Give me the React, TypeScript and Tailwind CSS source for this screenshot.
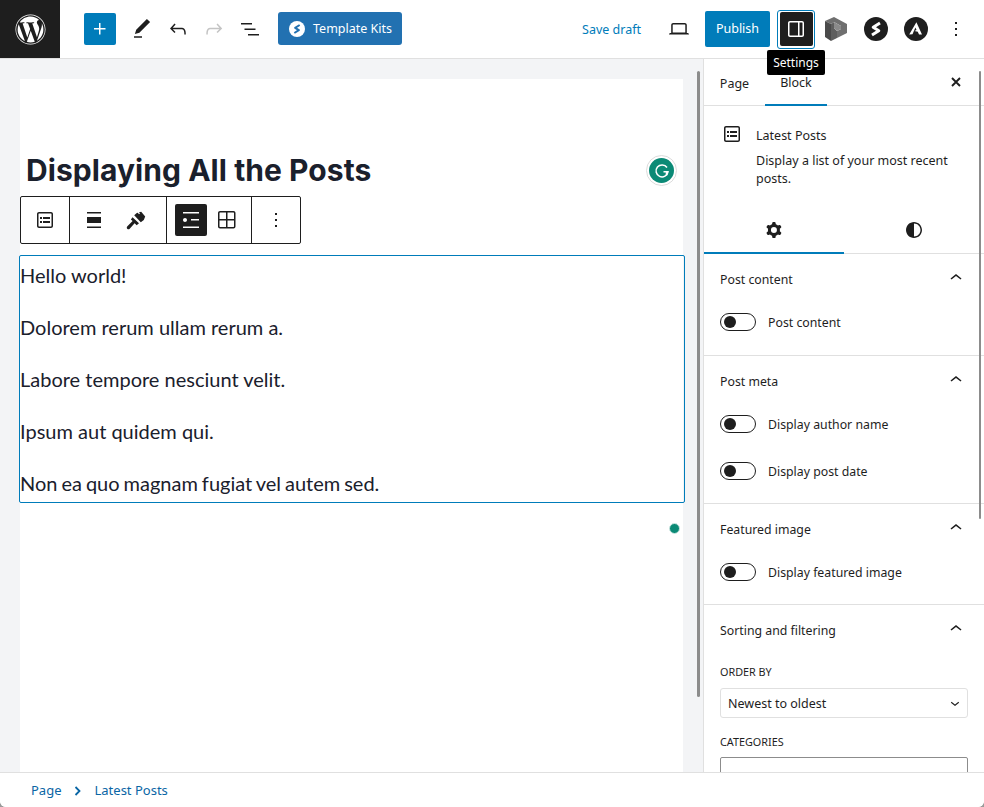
import React from 'react';
import { FaWordpress } from 'react-icons/fa';

const ui = "font-['Noto_Sans','Open_Sans',sans-serif]";

const Icon: React.FC<{ d: string; size?: number; className?: string; evenodd?: boolean }> = ({ d, size = 24, className = '', evenodd }) => (
  <svg width={size} height={size} viewBox="0 0 24 24" fill="currentColor" className={className}>
    <path d={d} fillRule={evenodd ? 'evenodd' : undefined} clipRule={evenodd ? 'evenodd' : undefined} />
  </svg>
);

const paths = {
  plus: 'M11 12.5V17.5H12.5V12.5H17.5V11H12.5V6H11V11H6V12.5H11Z',
  edit: 'M20.1 5.1L16.9 2 6.2 12.7l-1.3 4.4 4.5-1.3L20.1 5.1zM4 20.8h8v-1.5H4v1.5z',
  undo: 'M18.3 11.7c-.6-.6-1.4-.9-2.3-.9H6.7l2.9-3.3-1.1-1-4.5 5L8.5 16l1-1-2.7-2.7H16c.5 0 .9.2 1.3.5 1 1 1 3.4 1 4.5v.3h1.5v-.2c0-1.5 0-4.3-1.5-5.7z',
  redo: 'M15.6 6.5l-1.1 1 2.9 3.3H8c-.9 0-1.7.3-2.3.9-1.4 1.5-1.4 4.2-1.4 5.6v.2h1.5v-.3c0-1.1 0-3.5 1-4.5.3-.3.7-.5 1.3-.5h9.2L14.5 15l1.1 1.1 4.6-4.6-4.6-5z',
  listView: 'M3 6h11v1.5H3V6zm3.5 5.5h11V13h-11v-1.5zM21 17H10v1.5h11V17z',
  desktop: 'M20.5 16h-.7V8c0-1.1-.9-2-2-2H6.2c-1.1 0-2 .9-2 2v8h-.7c-.8 0-1.5.7-1.5 1.5h20c0-.8-.7-1.5-1.5-1.5zM5.7 8c0-.3.2-.5.5-.5h11.6c.3 0 .5.2.5.5v7.6H5.7V8z',
  sidebar: 'M18 4H6c-1.1 0-2 .9-2 2v12c0 1.1.9 2 2 2h12c1.1 0 2-.9 2-2V6c0-1.1-.9-2-2-2zm-4 14.5H6c-.3 0-.5-.2-.5-.5V6c0-.3.2-.5.5-.5h8v13zm4.5-.5c0 .3-.2.5-.5.5h-2.5v-13H18c.3 0 .5.2.5.5v12z',
  more: 'M13 19h-2v-2h2v2zm0-6h-2v-2h2v2zm0-6h-2V5h2v2z',
  postList: 'M18 4H6c-1.1 0-2 .9-2 2v12c0 1.1.9 2 2 2h12c1.1 0 2-.9 2-2V6c0-1.1-.9-2-2-2zm.5 14c0 .3-.2.5-.5.5H6c-.3 0-.5-.2-.5-.5V6c0-.3.2-.5.5-.5h12c.3 0 .5.2.5.5v12zM7 11h2V9H7v2zm0 4h2v-2H7v2zm3-4h7V9h-7v2zm0 4h7v-2h-7v2z',
  grid: 'm3 5c0-1.10457.89543-2 2-2h13.5c1.1046 0 2 .89543 2 2v13.5c0 1.1046-.8954 2-2 2h-13.5c-1.10457 0-2-.8954-2-2zm2-.5h6v6.5h-6.5v-6c0-.27614.22386-.5.5-.5zm-.5 8v6c0 .2761.22386.5.5.5h6v-6.5zm8 0v6.5h6c.2761 0 .5-.2239.5-.5v-6zm0-8v6.5h6.5v-6c0-.27614-.2239-.5-.5-.5z',
  listLayout: 'M4 4v1.5h16V4H4zm8 8.5h8V11h-8v1.5zM4 20h16v-1.5H4V20zm4-8c0-1.1-.9-2-2-2s-2 .9-2 2 .9 2 2 2 2-.9 2-2z',
  align: 'M19 5.5H5V4h14v1.5ZM19 20H5v-1.5h14V20ZM5 9h14v6H5V9Z',
  brush: 'M10.2 7.2L12.8 5l1-.3 1.200 1.500 1-.8-1-1.200 2.200-.4 4 4.700-1.400 3.500-3 2.300zM8.500 9.200L15 15.200 12.700 17.200 10.600 15.300 5.700 20.700C4.700 21.700 3.300 21.300 2.900 20.200 2.600 19.400 3 18.600 3.600 18L8.600 13.100 6.900 11.500z',
  cog: 'M10.289 4.836A1 1 0 0111.275 4h1.306a1 1 0 01.987.836l.244 1.466c.787.26 1.503.679 2.108 1.218l1.393-.522a1 1 0 011.216.437l.653 1.13a1 1 0 01-.23 1.273l-1.148.944a6.025 6.025 0 010 2.435l1.149.946a1 1 0 01.23 1.272l-.653 1.13a1 1 0 01-1.216.437l-1.394-.522c-.605.54-1.32.958-2.108 1.218l-.244 1.466a1 1 0 01-.987.836h-1.306a1 1 0 01-.986-.836l-.244-1.466a5.995 5.995 0 01-2.108-1.218l-1.394.522a1 1 0 01-1.217-.436l-.653-1.131a1 1 0 01.23-1.272l1.149-.946a6.026 6.026 0 010-2.435l-1.148-.944a1 1 0 01-.23-1.272l.653-1.131a1 1 0 011.217-.437l1.393.522a5.994 5.994 0 012.108-1.218l.244-1.466zM14.929 12a3 3 0 11-6 0 3 3 0 016 0z',
  styles: 'M12 4c-4.4 0-8 3.6-8 8s3.6 8 8 8 8-3.6 8-8-3.6-8-8-8zm0 14.5v-13c3.6 0 6.5 2.9 6.5 6.5s-2.9 6.5-6.5 6.5z',
  up: 'M6.5 12.4L12 8l5.5 4.4-.9 1.2L12 10l-4.5 3.6-1-1.2z',
  down: 'M17.5 11.6L12 16l-5.500-4.400.9-1.200L12 14l4.500-3.600 1 1.200z',
};

// the lightning "S" badge used by the Template Kits button and the plugin icon
const BoltBadge: React.FC<{ size: number; bg: string; fg: string }> = ({ size, bg, fg }) => (
  <svg width={size} height={size} viewBox="0 0 24 24">
    <circle cx="12" cy="12" r="12" fill={bg} />
    <path d="M16 6L9.200 10.200 14.800 13.800 8 18" fill="none" stroke={fg} strokeWidth="3" strokeLinejoin="round" />
  </svg>
);

const Toggle: React.FC<{ label: string }> = ({ label }) => (
  <div className="flex items-center h-[18px]">
    <span className="w-9 h-[18px] rounded-full border border-[#1e1e1e] bg-white flex items-center pl-[3px]">
      <span className="w-3 h-3 rounded-full bg-[#1e1e1e]" />
    </span>
    <span className="ml-3 pt-[3px] text-[12.3px] text-[#1e1e1e]">{label}</span>
  </div>
);

const Panel: React.FC<{ title: string; className: string; children: React.ReactNode }> = ({ title, className, children }) => (
  <section className={`border-b border-[#e0e0e0] ${className}`}>
    <div className="flex items-center justify-between px-4 h-[50px]">
      <h3 className="pt-[2px] text-[12.3px] text-[#1e1e1e] font-normal">{title}</h3>
      <Icon d={paths.up} className="text-[#1e1e1e] mt-[-2px]" />
    </div>
    <div className="px-4">{children}</div>
  </section>
);

const posts = [
  'Hello world!',
  'Dolorem rerum ullam rerum a.',
  'Labore tempore nesciunt velit.',
  'Ipsum aut quidem qui.',
  'Non ea quo magnam fugiat vel autem sed.',
];

export default function App() {
  return (
    <div className="w-[984px] h-[807px] bg-[#9a9a9a]">
      <div className={`${ui} w-full h-full flex flex-col overflow-hidden rounded-b-[6px] bg-white text-[#1e1e1e] relative`}>
        {/* top bar */}
        <header className="h-[59px] shrink-0 flex items-start border-b border-[#e0e0e0] bg-white">
          <div className="w-[60px] h-[58px] bg-[#1e1e1e] flex items-center justify-center text-white">
            <FaWordpress size={31} />
          </div>
          <div className="flex items-center h-[58px] ml-6">
            <button className="w-8 h-8 bg-[#007cba] rounded-[2px] text-white flex items-center justify-center">
              <Icon d={paths.plus} />
            </button>
            <div className="flex ml-[14px] gap-3">
              <Icon d={paths.edit} />
              <Icon d={paths.undo} />
              <Icon d={paths.redo} className="text-[#c4c4c4]" />
              <Icon d={paths.listView} />
            </div>
            <button className="ml-4 w-[124px] h-[33px] mt-[-1px] bg-[#2271b1] rounded-[3px] text-white flex items-center pl-[11px] text-[12.5px]">
              <BoltBadge size={16} bg="#ffffff" fg="#2271b1" />
              <span className="ml-2 pt-[2px]">Template Kits</span>
            </button>
          </div>
          <div className="ml-auto flex items-center h-[58px] mr-4">
            <span className="pt-[2px] text-[12.5px] text-[#007cba]">Save draft</span>
            <Icon d={paths.desktop} className="ml-[26px]" />
            <button className="ml-[14px] w-[65px] h-9 pt-[1px] bg-[#007cba] rounded-[2px] text-white text-[12.5px]">Publish</button>
            <div className="ml-[7px] w-[38px] h-[39px] rounded-[3px] border border-[#007cba] p-[1.5px] bg-white">
              <div className="w-full h-full bg-[#1e1e1e] text-white rounded-[2px] flex items-center justify-center">
                <Icon d={paths.sidebar} />
              </div>
            </div>
            <svg width="22" height="24" viewBox="0 0 22 24" className="ml-[10px]">
              <path d="M0 4L9 0l13 7v9l-10 5v-7l4-2V9L9 5 6 7z" fill="#6f6f6f" />
              <path d="M0 4l6 3v17l-6-4z" fill="#4a4a4a" />
              <path d="M6 7l3-2v6l3 3v7l-6 3z" fill="#5e5e5e" />
              <path d="M9 5l7 4v3l-4 2-3-3z" fill="#8a8a8a" />
            </svg>
            <div className="ml-[17px]"><BoltBadge size={24} bg="#1e1e1e" fg="#ffffff" /></div>
            <svg width="24" height="24" viewBox="0 0 24 24" className="ml-4">
              <circle cx="12" cy="12" r="12" fill="#1e1e1e" />
              <path d="M12.400 5.200L18 17.500h-3l-1.200-2.800-3.400-.6 2.100-1-1.100-2.600-2.900 6.800-3.300.2z" fill="#ffffff" />
            </svg>
            <Icon d={paths.more} className="ml-[16px]" />
          </div>
        </header>

        <div className="absolute left-[767px] top-[50px] w-[58px] h-[25px] bg-black rounded-[2px] text-white text-[12px] flex items-center justify-center z-20">Settings</div>

        <div className="flex-1 flex min-h-0">
          {/* canvas */}
          <main className="w-[704px] shrink-0 bg-[#f3f4f6] border-r border-[#e0e0e0] pl-5 pr-5 pt-5 relative overflow-hidden">
            <div className="w-[663px] h-full bg-white relative">
              <h1 className="pt-[71px] pl-[6px] text-[30px] leading-[40px] tracking-[0.06px] font-bold text-[#1a202c] font-['Inter',sans-serif]">Displaying All the Posts</h1>
              <div className="mt-[6px] w-[281px] h-[48px] border border-[#1e1e1e] rounded-[2px] bg-white flex items-stretch">
                <div className="w-[49px] border-r border-[#1e1e1e] flex items-center justify-center">
                  <Icon d={paths.postList} />
                </div>
                <div className="w-[97px] border-r border-[#1e1e1e] flex items-center pl-3 gap-[18px]">
                  <Icon d={paths.align} />
                  <Icon d={paths.brush} />
                </div>
                <div className="w-[85px] border-r border-[#1e1e1e] flex items-center pl-2 gap-2">
                  <span className="w-8 h-8 bg-[#1e1e1e] rounded-[2px] text-white flex items-center justify-center">
                    <Icon d={paths.listLayout} />
                  </span>
                  <Icon d={paths.grid} evenodd />
                </div>
                <div className="flex-1 flex items-center justify-center">
                  <Icon d={paths.more} />
                </div>
              </div>
              <ul className="mt-[11px] ml-[-1px] w-[666px] h-[248px] border border-[#007cba] rounded-[2px] pt-[3px] font-['Lato',sans-serif] text-[20px] leading-[32px] text-[#1a202c] flex flex-col gap-5">
                {posts.map(p => <li key={p} className="last:[word-spacing:-1.15px]">{p}</li>)}
              </ul>
              <span className="absolute left-[626px] top-[76px] w-[31px] h-[31px] rounded-full bg-white border border-[#dcdcdc] flex items-center justify-center">
                <span className="w-[25px] h-[25px] rounded-full bg-[#0b8a76] flex items-center justify-center">
                  <svg width="16" height="16" viewBox="0 0 16 16" fill="none" stroke="#ffffff" strokeWidth="1.500">
                    <path d="M13 4.500A6 6 0 1 0 14 8.800H9.500" />
                    <path d="M12.500 8.800v3.500" />
                  </svg>
                </span>
              </span>
              <span className="absolute left-[649px] top-[444px] w-[11px] h-[11px] rounded-full bg-[#0b8a76] border border-[#cfe8e3]" />
            </div>
            <span className="absolute left-[697px] top-[12px] w-[3px] h-[626px] bg-[#8c8c8c] rounded-full" />
          </main>

          {/* settings sidebar */}
          <aside className="flex-1 min-w-0 relative overflow-hidden">
            <div className="h-[47px] flex items-stretch border-b border-[#e0e0e0] text-[12.5px]">
              <span className="w-[61px] pt-1 flex items-center justify-center">Page</span>
              <span className="w-[62px] pt-1 flex items-center justify-center border-b-2 border-[#007cba] mb-[-1px]">Block</span>
              <svg width="10" height="10" viewBox="0 0 10 10" fill="none" stroke="#1e1e1e" strokeWidth="1.900" className="ml-auto mr-[23px] mt-[18px]">
                <path d="M1 1l8 8M9 1l-8 8" />
              </svg>
            </div>
            <div className="flex pl-4 pt-4 h-[101px]">
              <Icon d={paths.postList} size={24} />
              <div className="ml-3 w-[204px] text-[12.5px] leading-[18px] pt-[5px]">
                <div>Latest Posts</div>
                <p className="mt-[7px]">Display a list of your most recent posts.</p>
              </div>
            </div>
            <div className="h-[47px] flex border-b border-[#e0e0e0]">
              <span className="w-[140px] flex items-center justify-center border-b-2 border-[#007cba] mb-[-1px]"><Icon d={paths.cog} evenodd /></span>
              <span className="w-[140px] flex items-center justify-center"><Icon d={paths.styles} evenodd /></span>
            </div>
            <Panel title="Post content" className="h-[102px]">
              <div className="pt-[9px]"><Toggle label="Post content" /></div>
            </Panel>
            <Panel title="Post meta" className="h-[148px]">
              <div className="pt-[9px] flex flex-col gap-[29px]">
                <Toggle label="Display author name" />
                <Toggle label="Display post date" />
              </div>
            </Panel>
            <Panel title="Featured image" className="h-[101px]">
              <div className="pt-[9px]"><Toggle label="Display featured image" /></div>
            </Panel>
            <Panel title="Sorting and filtering" className="h-[300px]">
              <label className="block text-[10.8px] leading-4 mt-[9px]">ORDER BY</label>
              <div className="mt-2 w-[248px] h-[30px] border border-[#e0e0e0] rounded-[3px] flex items-center justify-between pl-[7px] pr-[3px] text-[12.5px]">
                <span className="pt-[2px]">Newest to oldest</span>
                <Icon d={paths.down} size={18} />
              </div>
              <label className="block text-[10.8px] leading-4 mt-4">CATEGORIES</label>
              <div className="mt-[7px] w-[248px] h-9 border border-[#8c8c8c] rounded-[2px]" />
            </Panel>
            <span className="absolute right-[3px] top-[12px] w-[2px] h-[448px] bg-[#8c8c8c] rounded-full" />
          </aside>
        </div>

        {/* breadcrumb */}
        <footer className="h-[35px] shrink-0 pt-[1px] bg-white border-t border-[#e0e0e0] flex items-center pl-[31px] text-[13px] text-[#0a66a5] z-10">
          <span>Page</span>
          <svg width="7" height="10" viewBox="0 0 7 10" fill="none" stroke="currentColor" strokeWidth="1.800" className="ml-3">
            <path d="M1.500 1l4 4-4 4" />
          </svg>
          <span className="ml-[14px]">Latest Posts</span>
        </footer>
      </div>
    </div>
  );
}
